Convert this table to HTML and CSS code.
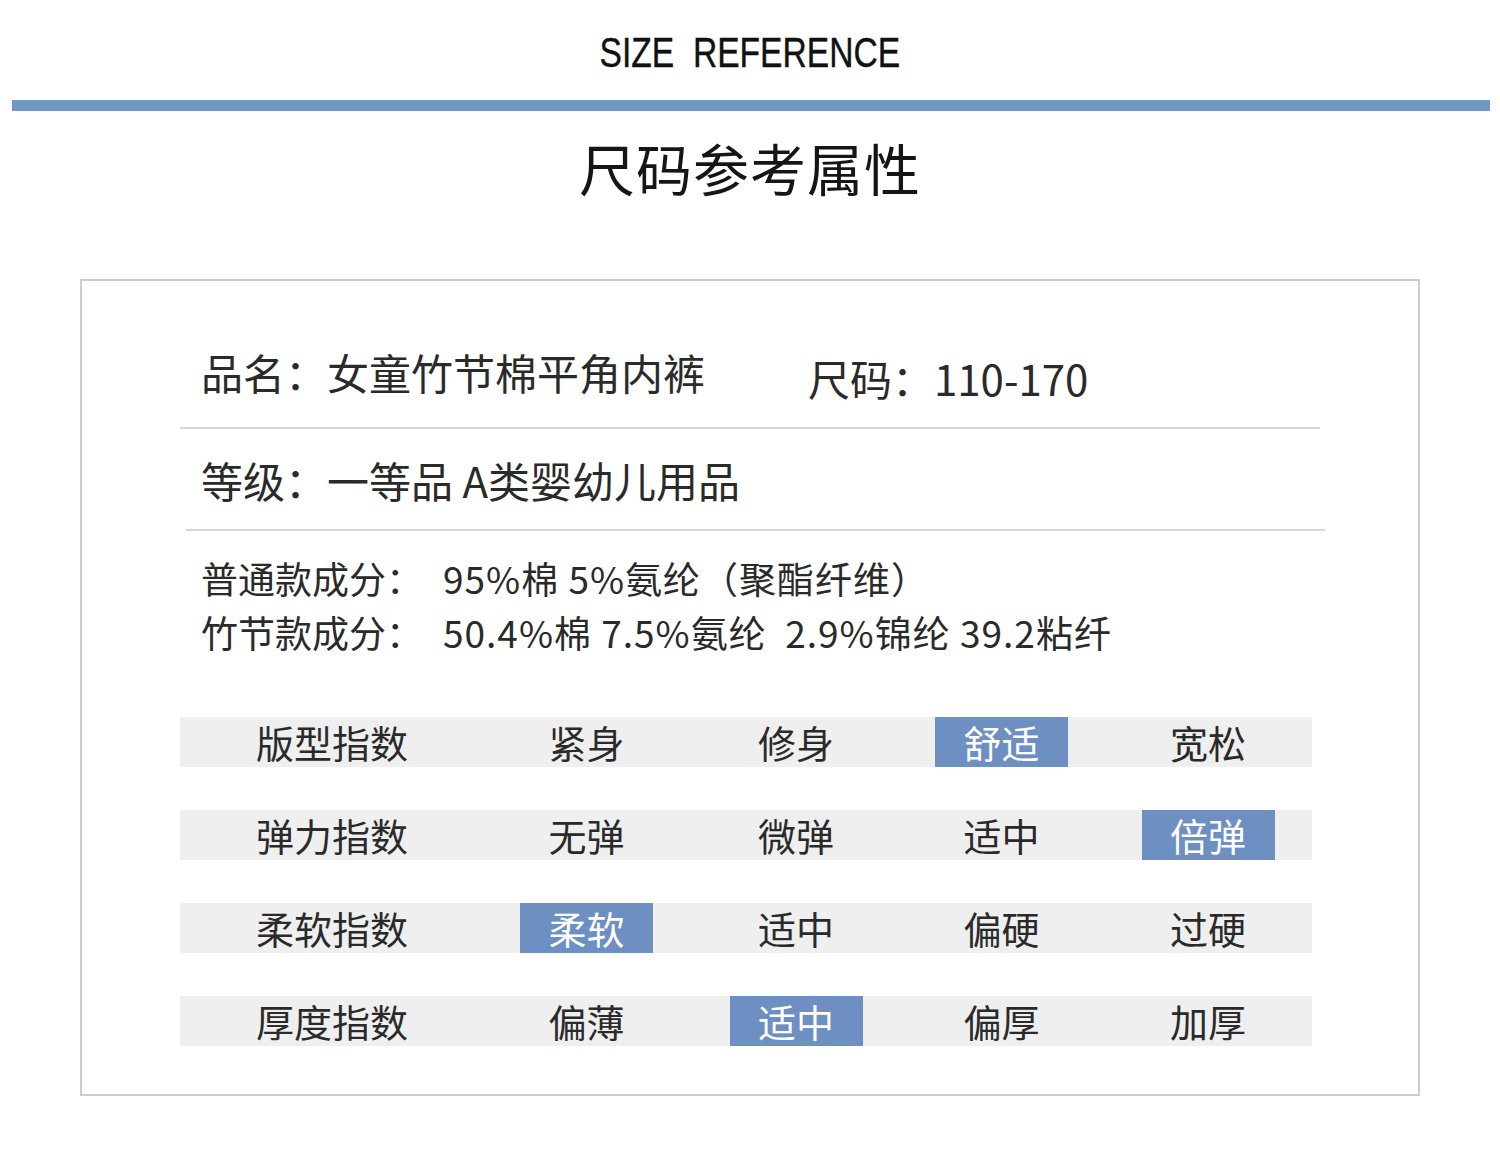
FILE: index.html
```html
<!DOCTYPE html>
<html lang="zh-CN">
<head>
<meta charset="utf-8">
<title>尺码参考属性</title>
<link rel="stylesheet" href="styles.css">
</head>
<body>
<div class="page">
  <header class="head">
    <span class="head-text">SIZE&nbsp;&nbsp;REFERENCE</span>
  </header>
  <div class="bar"></div>
  <h1 class="title">尺码参考属性</h1>

  <section class="card">
    <div class="info info-first">
      <div class="name">品名：女童竹节棉平角内裤</div>
      <div class="size">尺码：110-170</div>
    </div>
    <div class="info info-second">
      <div class="name">等级：一等品 A类婴幼儿用品</div>
    </div>
    <div class="comp">
      <div class="comp-line"><span class="comp-label">普通款成分：</span><span class="comp-val">95%棉 5%氨纶（聚酯纤维）</span></div>
      <div class="comp-line"><span class="comp-label">竹节款成分：</span><span class="comp-val">50.4%棉 7.5%氨纶&nbsp;&nbsp;2.9%锦纶 39.2粘纤</span></div>
    </div>

    <div class="index">
      <div class="row">
        <div class="cell label">版型指数</div>
        <div class="cell"><span class="opt">紧身</span></div>
        <div class="cell"><span class="opt">修身</span></div>
        <div class="cell"><span class="opt on">舒适</span></div>
        <div class="cell"><span class="opt">宽松</span></div>
      </div>
      <div class="row">
        <div class="cell label">弹力指数</div>
        <div class="cell"><span class="opt">无弹</span></div>
        <div class="cell"><span class="opt">微弹</span></div>
        <div class="cell"><span class="opt">适中</span></div>
        <div class="cell"><span class="opt on">倍弹</span></div>
      </div>
      <div class="row">
        <div class="cell label">柔软指数</div>
        <div class="cell"><span class="opt on">柔软</span></div>
        <div class="cell"><span class="opt">适中</span></div>
        <div class="cell"><span class="opt">偏硬</span></div>
        <div class="cell"><span class="opt">过硬</span></div>
      </div>
      <div class="row">
        <div class="cell label">厚度指数</div>
        <div class="cell"><span class="opt">偏薄</span></div>
        <div class="cell"><span class="opt on">适中</span></div>
        <div class="cell"><span class="opt">偏厚</span></div>
        <div class="cell"><span class="opt">加厚</span></div>
      </div>
    </div>
  </section>
</div>
</body>
</html>
```

FILE: styles.css
```css
* { box-sizing: border-box; }
html, body { margin: 0; padding: 0; background: #ffffff; }
body {
  font-family: "Noto Sans CJK SC", "Noto Sans", sans-serif;
  color: #2a2a2a;
}
.page { width: 1500px; height: 1166px; overflow: hidden; }

.head {
  height: 100px;
  display: flex;
  justify-content: center;
  align-items: center;
  padding-top: 6px;
}
.head-text {
  display: inline-block;
  font-family: "Liberation Sans", Arial, sans-serif;
  font-size: 42px;
  line-height: 1;
  color: #111;
  transform: scaleX(0.8);
  white-space: nowrap;
  -webkit-text-stroke: 0.4px #111;
}
.bar {
  height: 11px;
  margin: 0 10px 0 12px;
  background: #7397c4;
}
.title {
  margin: 28px 0 0;
  text-align: center;
  font-size: 56px;
  line-height: 56px;
  font-weight: 400;
  color: #151515;
  letter-spacing: 1px;
}

.card {
  margin: 84px 0 0 80px;
  width: 1340px;
  border: 2px solid #cdcdcd;
  padding: 0 98px 48px 98px;
}

.info {
  display: flex;
  align-items: flex-start;
  padding-left: 21px;
  font-size: 42px;
  line-height: 42px;
  color: #2a2a2a;
}
.info-first {
  padding-top: 70px;
  padding-bottom: 28px;
  border-bottom: 2px solid #d6d6d6;
}
.info-first .name { width: 607px; }
.info-first .size { margin-top: 6px; }
.info-second {
  padding-top: 30px;
  padding-bottom: 28px;
  border-bottom: 2px solid #d6d6d6;
  margin-left: 6px;
  margin-right: -5px;
  padding-left: 15px;
}

.comp {
  padding: 20px 0 0 21px;
  font-size: 37px;
  line-height: 54px;
  color: #2a2a2a;
}
.comp-line { white-space: nowrap; }
.comp-label { display: inline-block; width: 242px; }
.comp-val { letter-spacing: 1px; }

.index {
  margin-top: 58px;
  width: 1132px;
  display: flex;
  flex-direction: column;
  gap: 43px;
}
.row {
  display: grid;
  grid-template-columns: 300px 213px 206px 205px 208px;
  height: 50px;
  background: #efefef;
}
.cell {
  display: flex;
  align-items: center;
  justify-content: center;
  font-size: 38px;
  line-height: 50px;
  color: #2a2a2a;
}
.label { padding-left: 4px; }
.opt {
  display: flex;
  align-items: center;
  justify-content: center;
  width: 133px;
  height: 50px;
}
.opt.on {
  background: #6d8fc1;
  color: #ffffff;
}
```
